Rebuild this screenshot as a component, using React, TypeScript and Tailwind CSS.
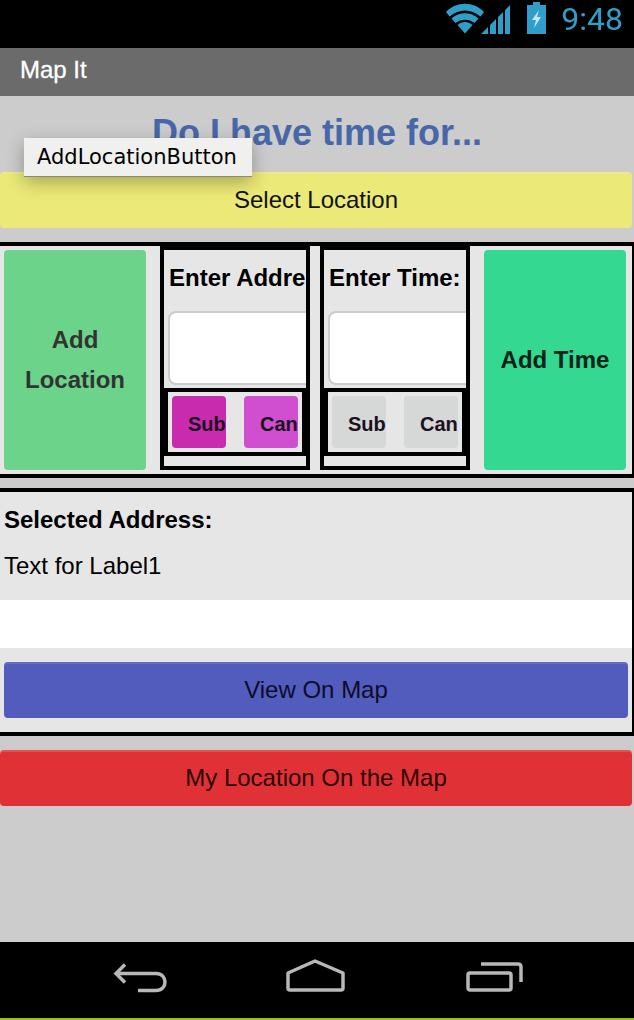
function StatusIcons() {
  return (
    <div className="flex items-start blur-[0.6px]">
      <svg width="65" height="32" viewBox="0 0 65 32" className="mt-[2px]">
        <path d="M0 9 C10 -2 28 -2 38 9 L34.500 13.500 C25 5.500 13 5.500 3.500 13.500 Z" fill="#2f9fc9" />
        <path d="M5.500 15.500 C13 8.500 25 8.500 32.500 15.500 L28.500 20 C23 15.500 15 15.500 9.500 20 Z" fill="#2f9fc9" />
        <path d="M11.500 22 C16 18 22 18 26.500 22 L19 30.500 Z" fill="#2f9fc9" />
        <path d="M35 31 L42 24 V31 Z M44 22 L50 16 V31 H44 Z M52 14 L57 9 V31 H52 Z M59 7 L64 2 V31 H59 Z" fill="#2f9fc9" />
      </svg>
      <svg width="22" height="32" viewBox="0 0 22 32" className="ml-[15px] mt-[1px]">
        <path d="M7 0 H14 V3 H20 V32 H1 V3 H7 Z" fill="#2f9fc9" />
        <path d="M13 8 L6 18 H10 L8 26 L15 15 H11 Z" fill="#c8e6f2" />
      </svg>
    </div>
  );
}

function BackIcon() {
  return (
    <svg width="54" height="30" viewBox="0 0 54 30" fill="none" stroke="#b8b8b8" strokeWidth="3.5" className="blur-[0.6px]">
      <path d="M12 1.500 L3 10.500 L12 19.500" />
      <path d="M3 10.500 H43 C55 10.500 55 27.500 43 27.500 H25" />
    </svg>
  );
}

function HomeIcon() {
  return (
    <svg width="60" height="33" viewBox="0 0 60 33" fill="none" stroke="#b8b8b8" strokeWidth="3.5" strokeLinejoin="round" className="blur-[0.6px]">
      <path d="M29 2 L57 14 V29 Q57 31 55 31 H4 Q2 31 2 29 V14 Z" />
    </svg>
  );
}

function RecentIcon() {
  return (
    <svg width="58" height="30" viewBox="0 0 58 30" fill="none" stroke="#b8b8b8" strokeWidth="3.5" className="blur-[0.6px]">
      <rect x="2" y="11" width="43" height="17" rx="2" />
      <path d="M15 2 H52 Q55 2 55 5 V20" />
    </svg>
  );
}

function SmallButton({ label, color }: { label: string; color: string }) {
  return (
    <div className={`h-[52px] w-[54px] overflow-hidden rounded-[4px] pt-[2px] pl-4 text-[20px] leading-[52px] font-bold text-[#1a1020] ${color}`}>
      {label}
    </div>
  );
}

function EntryBox({ label, first, second }: { label: string; first: string; second: string }) {
  return (
    <div className="h-[224px] w-[150px] border-4 border-black">
      <div className="h-[61px] overflow-hidden pt-[12px] pl-[5px] text-[24px] leading-[32px] font-bold whitespace-nowrap text-black">
        {label}
      </div>
      <div className="overflow-hidden pl-1">
        <input className="block h-[74px] w-[170px] rounded-[8px] border-2 border-[#cccccc] bg-white" />
      </div>
      <div className="mt-[3px] h-[68px] border-4 border-black">
        <div className="flex gap-[18px] pt-1 pl-1">
          <SmallButton label="Sub" color={first} />
          <SmallButton label="Can" color={second} />
        </div>
      </div>
    </div>
  );
}

export default function App() {
  return (
    <div className="relative flex h-[1020px] w-[634px] flex-col overflow-hidden bg-black font-['Liberation_Sans',Arial,sans-serif]">
      {/* status bar */}
      <div className="flex h-12 items-start justify-end bg-black pt-[1px] pr-[11px]">
        <StatusIcons />
        <span className="ml-[13px] font-['Roboto',sans-serif] text-[32px] leading-[36px] text-[#2f9fc9] blur-[0.4px]">9:48</span>
      </div>

      {/* title bar */}
      <div className="flex h-12 items-center bg-[#6b6b6b] pb-1 pl-5 text-[24px] font-medium text-white [-webkit-text-stroke:0.3px_white]">
        Map It
      </div>

      {/* screen */}
      <div className="relative flex-1 bg-[#cccccc]">
        <h1 className="flex h-[76px] items-center justify-center pb-[2px] text-[36px] font-bold text-[#4767a8]">
          Do I have time for...
        </h1>

        <button className="block h-14 w-[632px] rounded-[4px] bg-[#ebe977] text-center text-[24px] text-[#111] shadow-[inset_0_2px_0_rgba(255,255,255,0.12)]">
          Select Location
        </button>

        <div className="mt-[14px] flex h-[236px] w-[634px] border-y-4 border-r-2 border-black bg-[#e6e6e6]">
          <div className="mt-1 ml-1 flex h-[220px] w-[142px] flex-col items-center justify-center rounded-[4px] bg-[#6bd48a] text-center text-[24px] leading-[40px] font-bold text-[#333]">
            <span>Add</span>
            <span>Location</span>
          </div>
          <div className="ml-[14px]">
            <EntryBox label="Enter Address:" first="bg-[#c92bae]" second="bg-[#d04fd0]" />
          </div>
          <div className="ml-[10px]">
            <EntryBox label="Enter Time:" first="bg-[#d6d8d8]" second="bg-[#d6d8d8]" />
          </div>
          <div className="mt-1 ml-[14px] flex h-[220px] w-[142px] items-center justify-center rounded-[4px] bg-[#34d890] text-[24px] font-bold text-[#06231a]">
            Add Time
          </div>
        </div>

        <div className="mt-[10px] h-[248px] w-[634px] border-y-4 border-r-2 border-black bg-[#e6e6e6]">
          <div className="h-[108px] pl-1 text-[24px] text-black">
            <div className="pt-[12px] leading-[32px] font-bold">Selected Address:</div>
            <div className="pt-[14px] leading-[32px]">Text for Label1</div>
          </div>
          <input className="block h-12 w-full bg-white" />
          <button className="mt-[14px] ml-1 block h-14 w-[624px] rounded-[4px] bg-[#515cbd] text-center text-[24px] text-[#0c0c2a] shadow-[inset_0_2px_0_rgba(255,255,255,0.12)]">
            View On Map
          </button>
        </div>

        <button className="mt-[14px] block h-14 w-[632px] rounded-[4px] bg-[#e03236] text-center text-[24px] text-[#2a0505] shadow-[inset_0_2px_0_rgba(255,255,255,0.15)]">
          My Location On the Map
        </button>

        {/* hover tooltip from the designer */}
        <div className="absolute top-[42px] left-[24px] h-[38px] w-[228px] bg-[#f0f0ee] pl-[13px] font-['DejaVu_Sans',sans-serif] text-[21px] leading-[38px] whitespace-nowrap text-black shadow-[0_1px_0_#8a8a7a,0_6px_18px_rgba(0,0,0,0.3)]">
          AddLocationButton
        </div>
      </div>

      {/* nav bar */}
      <div className="flex h-[76px] items-start gap-[120px] bg-black pt-[21px] pl-[113px]">
        <BackIcon />
        <div className="-mt-[4px] -ml-[1px]">
          <HomeIcon />
        </div>
        <div className="-mt-[1px]">
          <RecentIcon />
        </div>
      </div>
      <div className="h-[2px] bg-[#95c11f]" />
    </div>
  );
}
